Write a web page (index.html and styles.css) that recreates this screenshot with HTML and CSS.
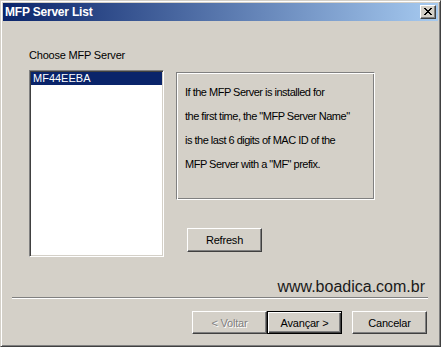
FILE: index.html
```html
<!DOCTYPE html>
<html>
<head>
<meta charset="utf-8">
<title>MFP Server List</title>
<link rel="stylesheet" href="styles.css">
</head>
<body>
<div class="window">
  <div class="titlebar">
    <span class="title">MFP Server List</span>
    <div class="close">
      <svg width="8" height="7" viewBox="0 0 8 7" shape-rendering="crispEdges">
        <rect x="0" y="0" width="2" height="1" fill="#000"/>
        <rect x="6" y="0" width="2" height="1" fill="#000"/>
        <rect x="1" y="1" width="2" height="1" fill="#000"/>
        <rect x="5" y="1" width="2" height="1" fill="#000"/>
        <rect x="2" y="2" width="4" height="1" fill="#000"/>
        <rect x="3" y="3" width="2" height="1" fill="#000"/>
        <rect x="2" y="4" width="4" height="1" fill="#000"/>
        <rect x="1" y="5" width="2" height="1" fill="#000"/>
        <rect x="5" y="5" width="2" height="1" fill="#000"/>
        <rect x="0" y="6" width="2" height="1" fill="#000"/>
        <rect x="6" y="6" width="2" height="1" fill="#000"/>
      </svg>
    </div>
  </div>
  <div class="content">
    <div class="main">
      <div class="left">
        <div class="label">Choose MFP Server</div>
        <div class="listbox">
          <div class="item selected">MF44EEBA</div>
        </div>
      </div>
      <div class="right">
        <div class="info">
          <p>If the MFP Server is installed for</p>
          <p>the first time, the "MFP Server Name"</p>
          <p>is the last 6 digits of MAC ID of the</p>
          <p>MFP Server with a "MF" prefix.</p>
        </div>
        <div class="btn refresh">Refresh</div>
      </div>
    </div>
    <div class="watermark">www.boadica.com.br</div>
    <div class="separator"></div>
    <div class="buttons">
      <div class="btn disabled">&lt; Voltar</div>
      <div class="btn default">Avançar &gt;</div>
      <div class="btn cancel">Cancelar</div>
    </div>
  </div>
</div>
</body>
</html>
```

FILE: styles.css
```css
html, body {
  margin: 0;
  padding: 0;
  width: 441px;
  height: 347px;
  overflow: hidden;
  background: #d4d0c8;
}

.window {
  box-sizing: border-box;
  width: 441px;
  height: 347px;
  background: #d4d0c8;
  border: 1px solid;
  border-color: #d4d0c8 #404040 #404040 #d4d0c8;
  box-shadow: inset 1px 1px #ffffff, inset -1px -1px #808080;
  padding: 2px;
  display: flex;
  flex-direction: column;
  font-family: "Liberation Sans", Arial, sans-serif;
  font-size: 11px;
  color: #000;
}

.titlebar {
  height: 18px;
  flex: none;
  display: flex;
  align-items: center;
  justify-content: space-between;
  background: linear-gradient(90deg, #0a246a 0%, #a6caf0 100%);
  padding-left: 2px;
}

.title {
  color: #fff;
  font-weight: bold;
  font-size: 12px;
  letter-spacing: -0.2px;
  line-height: 18px;
}

.close {
  box-sizing: border-box;
  width: 16px;
  height: 14px;
  margin-right: 2px;
  background: #d4d0c8;
  border: 1px solid;
  border-color: #ffffff #404040 #404040 #ffffff;
  box-shadow: inset -1px -1px #808080;
  display: flex;
  align-items: center;
  justify-content: center;
  padding: 0 1px 1px 0;
}

.close svg {
  display: block;
}

.content {
  flex: 1;
  display: flex;
  flex-direction: column;
}

.main {
  display: flex;
  padding: 28px 0 0 26px;
}

.left {
  display: flex;
  flex-direction: column;
}

.label {
  line-height: 13px;
  letter-spacing: -0.2px;
  margin-bottom: 8px;
}

.listbox {
  box-sizing: border-box;
  width: 135px;
  height: 187px;
  background: #fff;
  border: 1px solid;
  border-color: #808080 #ffffff #ffffff #808080;
  box-shadow: inset 1px 1px #404040, inset -1px -1px #d4d0c8;
  padding: 1px;
}

.item {
  height: 13px;
  line-height: 13px;
  padding-left: 2px;
}

.item.selected {
  background: #0a246a;
  color: #fff;
}

.right {
  display: flex;
  flex-direction: column;
  align-items: flex-start;
  margin-left: 12px;
  padding-top: 23px;
}

.info {
  box-sizing: border-box;
  width: 199px;
  height: 128px;
  border: 1px solid;
  border-color: #808080 #ffffff #ffffff #808080;
  box-shadow: inset 1px 1px #ffffff, inset -1px -1px #808080;
  padding: 7px 0 0 8px;
}

.info p {
  margin: 0;
  line-height: 24px;
  letter-spacing: -0.5px;
  white-space: nowrap;
}

.btn {
  box-sizing: border-box;
  width: 75px;
  height: 23px;
  display: flex;
  align-items: center;
  justify-content: center;
  background: #d4d0c8;
  border: 1px solid;
  border-color: #ffffff #404040 #404040 #ffffff;
  box-shadow: inset -1px -1px #808080;
  letter-spacing: -0.2px;
}

.refresh {
  margin-top: 28px;
  margin-left: 11px;
  height: 24px;
}

.watermark {
  margin-top: 21px;
  padding-right: 13px;
  text-align: right;
  font-size: 16px;
  line-height: 18px;
  color: #1a1a1a;
}

.separator {
  height: 1px;
  margin: 1px 10px 0 9px;
  border-top: 1px solid #808080;
  border-bottom: 1px solid #ffffff;
  height: 0;
}

.buttons {
  display: flex;
  justify-content: flex-end;
  padding-right: 11px;
  margin-top: 12px;
}

.btn.disabled {
  color: #808080;
  text-shadow: 1px 1px #ffffff;
}

.btn.default {
  border-color: #000;
  box-shadow: inset 1px 1px #ffffff, inset -1px -1px #404040, inset -2px -2px #808080;
}

.btn.cancel {
  margin-left: 10px;
}
```
